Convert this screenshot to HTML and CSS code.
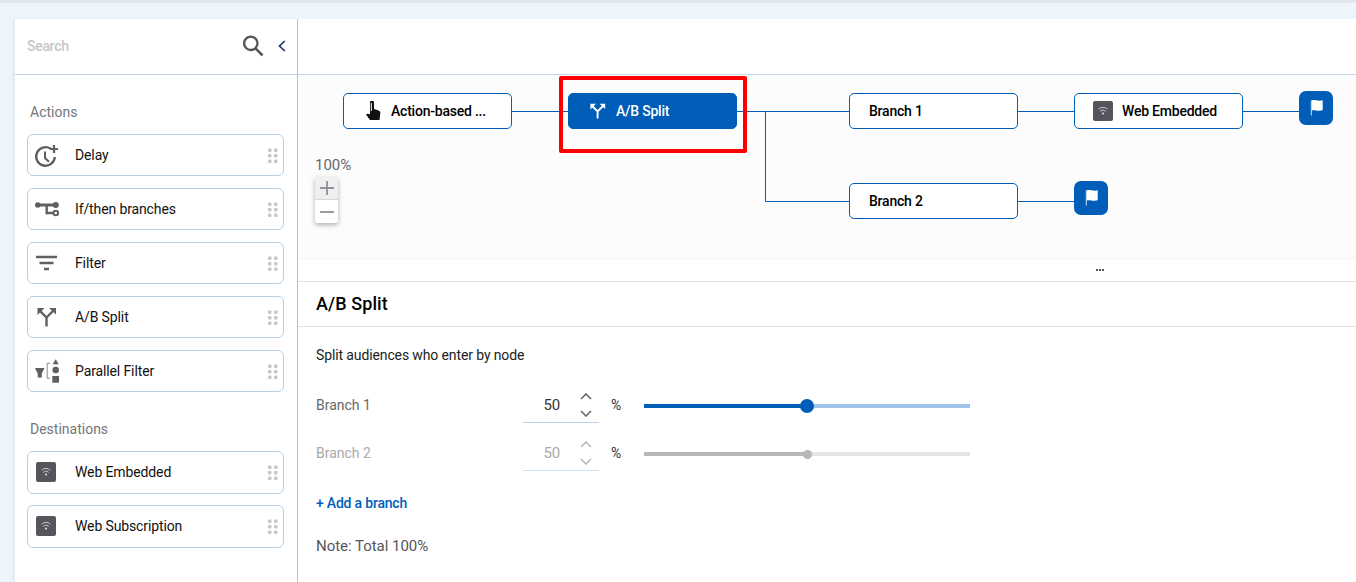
FILE: index.html
```html
<!DOCTYPE html>
<html lang="en">
  <head>
    <meta charset="UTF-8" />
    <meta name="viewport" content="width=device-width, initial-scale=1.0" />
    <title>A/B Split</title>
    <link rel="stylesheet" href="styles.css">
  </head>
  <body>
    <svg class="defs" width="0" height="0">
      <symbol id="wifi" viewBox="0 0 20 20">
        <rect width="20" height="20" rx="2" fill="#55565c" />
        <path d="M5.500 8.200a6.400 6.400 0 0 1 9 0M7.200 10.300a4 4 0 0 1 5.600 0" fill="none" stroke="#c4c4c8" stroke-width="1" />
        <circle cx="10" cy="12.600" r="1" fill="#e8e8ea" />
      </symbol>
      <symbol id="split" viewBox="0 0 20 20">
        <path d="M9.500 19.500v-9L3 4M9.500 10.500L16 4" fill="none" stroke="currentColor" stroke-width="2.400" />
        <path d="M.5 1h7L.5 8zM19 1v6.500L12 1z" fill="currentColor" />
      </symbol>
      <symbol id="flag" viewBox="0 0 16 16">
        <path d="M1.500.5c3-1.300 6 1 11.200-.2v10c-5 1.300-8-1-11.200.2z" fill="#fff" />
        <path d="M1.300.5v15" stroke="#cfe0f3" stroke-width="1" />
      </symbol>
      <symbol id="grip" viewBox="0 0 10 14">
        <g fill="#c6c7ca">
          <rect x="0" y="0" width="3.500" height="3.500" rx="1" />
          <rect x="6" y="0" width="3.500" height="3.500" rx="1" />
          <rect x="0" y="5.500" width="3.500" height="3.500" rx="1" />
          <rect x="6" y="5.500" width="3.500" height="3.500" rx="1" />
          <rect x="0" y="11" width="3.500" height="3.500" rx="1" />
          <rect x="6" y="11" width="3.500" height="3.500" rx="1" />
        </g>
      </symbol>
    </svg>

    <div class="top-strip"></div>
    <div class="app">
      <aside class="sidebar">
        <div class="search">
          <span class="search-text">Search</span>
          <svg class="search-icon" viewBox="0 0 22 22" width="22" height="22">
            <circle cx="7.800" cy="8.300" r="6.700" fill="none" stroke="#55565c" stroke-width="2.300" />
            <path d="M12.500 13.300l7 7" stroke="#55565c" stroke-width="2.600" />
          </svg>
          <svg class="collapse-icon" viewBox="0 0 8 12" width="8" height="12">
            <path d="M6.800 1L1.500 6l5.300 5" fill="none" stroke="#1f3b63" stroke-width="1.700" />
          </svg>
        </div>

        <div class="palette">
          <h4 class="group-title">Actions</h4>
          <div class="group">
            <div class="item">
              <svg class="item-icon" viewBox="0 0 26 24" width="26" height="24">
                <path d="M15.500 5.600A9.300 9.300 0 1 0 19.800 14" fill="none" stroke="#5f5f62" stroke-width="2.400" />
                <path d="M10 8.500V15l4 3.800" fill="none" stroke="#5f5f62" stroke-width="2" />
                <path d="M19 2v8M15 6h8" stroke="#5f5f62" stroke-width="2.200" />
              </svg>
              <span class="item-label">Delay</span>
              <svg class="grip"><use href="#grip" /></svg>
            </div>
            <div class="item">
              <svg class="item-icon" viewBox="0 0 26 16" width="26" height="16">
                <circle cx="2.800" cy="4" r="2.800" fill="#5f5f62" />
                <circle cx="20.800" cy="4" r="3" fill="#5f5f62" />
                <circle cx="20.800" cy="12" r="2.300" fill="none" stroke="#5f5f62" stroke-width="2" />
                <path d="M3 4h18" stroke="#5f5f62" stroke-width="3" />
                <path d="M11.700 4v8h7" fill="none" stroke="#5f5f62" stroke-width="2.400" />
              </svg>
              <span class="item-label">If/then branches</span>
              <svg class="grip"><use href="#grip" /></svg>
            </div>
            <div class="item">
              <svg class="item-icon" viewBox="0 0 26 16" width="26" height="16">
                <path d="M1 2h21M4.500 8h14M9 14h5" stroke="#5f5f62" stroke-width="2.400" />
              </svg>
              <span class="item-label">Filter</span>
              <svg class="grip"><use href="#grip" /></svg>
            </div>
            <div class="item">
              <svg class="item-icon icon-split" viewBox="0 0 20 20" width="20" height="20"><use href="#split" /></svg>
              <span class="item-label">A/B Split</span>
              <svg class="grip"><use href="#grip" /></svg>
            </div>
            <div class="item">
              <svg class="item-icon" viewBox="0 0 26 24" width="26" height="24">
                <path d="M0 9h9.500L6.800 14.500v4H2.700v-4z" fill="#5f5f62" />
                <path d="M15 4.200h-2.800v15H15" fill="none" stroke="#8a8a8c" stroke-width="1" />
                <path d="M20.700.3l3 5h-6z" fill="#5f5f62" />
                <circle cx="20.700" cy="11" r="3.300" fill="#5f5f62" />
                <rect x="17.300" y="17" width="6.700" height="6.700" fill="#5f5f62" />
              </svg>
              <span class="item-label">Parallel Filter</span>
              <svg class="grip"><use href="#grip" /></svg>
            </div>
          </div>

          <h4 class="group-title dest-title">Destinations</h4>
          <div class="group group-dest">
            <div class="item item-dest">
              <svg class="item-icon icon-wifi"><use href="#wifi" /></svg>
              <span class="item-label">Web Embedded</span>
              <svg class="grip"><use href="#grip" /></svg>
            </div>
            <div class="item item-dest">
              <svg class="item-icon icon-wifi"><use href="#wifi" /></svg>
              <span class="item-label">Web Subscription</span>
              <svg class="grip"><use href="#grip" /></svg>
            </div>
          </div>
        </div>
      </aside>

      <main class="main">
        <div class="toolbar"></div>

        <section class="canvas">
          <!-- connector lines -->
          <svg class="lines" width="1058" height="183">
            <path d="M214 36.500h56M439 36.500h112M720 36.500h56M945 36.500h56M467.500 36.500v90h83.500M720 126.500h56" fill="none" stroke="#005eb8" stroke-width="1" />
          </svg>

          <div class="node node-action" style="left:45px;top:18px">
            <svg class="node-hand" viewBox="0 0 16 20" width="16" height="20">
              <path d="M5 1.500a2 2 0 0 1 4 0V8l4 1.300c1.500.5 2.500 1.500 2.300 3l-.8 6.700H5L1 13.500c1.200-1.200 2.700-1 4 0z" fill="#111" />
              <path d="M6.300 2v8" stroke="#fff" stroke-width="1" />
            </svg>
            <span>Action-based ...</span>
          </div>
          <div class="node node-active" style="left:270px;top:18px">
            <svg class="node-split" viewBox="0 0 20 20" width="16" height="16"><use href="#split" /></svg>
            <span>A/B Split</span>
          </div>
          <div class="node node-plain" style="left:551px;top:18px"><span>Branch 1</span></div>
          <div class="node node-plain" style="left:551px;top:108px"><span>Branch 2</span></div>
          <div class="node node-web" style="left:776px;top:18px">
            <svg class="node-wifi"><use href="#wifi" /></svg>
            <span>Web Embedded</span>
          </div>
          <div class="end" style="left:1001px;top:16px"><svg width="16" height="16"><use href="#flag" /></svg></div>
          <div class="end" style="left:776px;top:106px"><svg width="16" height="16"><use href="#flag" /></svg></div>

          <div class="highlight"></div>

          <div class="zoom">
            <div class="zoom-value">100%</div>
            <div class="zoom-box">
              <div class="zoom-btn zoom-in">
                <svg viewBox="0 0 16 16" width="16" height="16"><path d="M1 8h14M8 1v14" stroke="#8f9299" stroke-width="1.800" /></svg>
              </div>
              <div class="zoom-btn">
                <svg viewBox="0 0 16 16" width="16" height="16"><path d="M1 8h14" stroke="#8f9299" stroke-width="1.800" /></svg>
              </div>
            </div>
          </div>
        </section>

        <div class="resizer">
          <span class="dots"><i></i><i></i><i></i></span>
        </div>

        <section class="panel">
          <h2 class="panel-title">A/B Split</h2>
          <div class="panel-body">
            <p class="panel-desc">Split audiences who enter by node</p>

            <div class="split-row">
              <span class="split-name">Branch 1</span>
              <div class="stepper">
                <span class="stepper-value">50</span>
                <span class="stepper-arrows">
                  <svg viewBox="0 0 12 7" width="12" height="7"><path d="M1 6l5-5 5 5" fill="none" stroke="#66676b" stroke-width="1.600" /></svg>
                  <svg viewBox="0 0 12 7" width="12" height="7"><path d="M1 1l5 5 5-5" fill="none" stroke="#66676b" stroke-width="1.600" /></svg>
                </span>
              </div>
              <span class="percent">%</span>
              <div class="slider">
                <div class="slider-fill" style="width:50%"></div>
                <div class="slider-knob" style="left:50%"></div>
              </div>
            </div>

            <div class="split-row split-row-off">
              <span class="split-name">Branch 2</span>
              <div class="stepper">
                <span class="stepper-value">50</span>
                <span class="stepper-arrows">
                  <svg viewBox="0 0 12 7" width="12" height="7"><path d="M1 6l5-5 5 5" fill="none" stroke="#b9b9bb" stroke-width="1.600" /></svg>
                  <svg viewBox="0 0 12 7" width="12" height="7"><path d="M1 1l5 5 5-5" fill="none" stroke="#b9b9bb" stroke-width="1.600" /></svg>
                </span>
              </div>
              <span class="percent">%</span>
              <div class="slider">
                <div class="slider-fill" style="width:50%"></div>
                <div class="slider-knob" style="left:50%"></div>
              </div>
            </div>

            <a class="add-branch">+ Add a branch</a>
            <p class="note">Note: Total 100%</p>
          </div>
        </section>
      </main>
    </div>
  </body>
</html>
```

FILE: styles.css
```css
* {
  box-sizing: border-box;
}

html,
body {
  height: 100%;
}

body {
  margin: 0;
  overflow: hidden;
  font-family: Roboto, "Liberation Sans", sans-serif;
  font-size: 14px;
  letter-spacing: -0.12px;
  color: #111;
  background-color: #edf4fc;
}

.defs {
  position: absolute;
}

.top-strip {
  height: 3px;
  background-color: #e4e6ee;
}

.app {
  display: flex;
  height: 579px;
  padding: 16px 0 0 15px;
}

/* left column */
.sidebar {
  width: 283px;
  flex: none;
  background-color: #fff;
  border-right: 1px solid #b9c3cf;
  box-shadow: -2px 0 3px rgba(0, 0, 0, 0.06);
}

.search {
  display: flex;
  align-items: center;
  height: 56px;
  padding: 0 11px 1px 12px;
  border-bottom: 1px solid #c5d3e6;
}

.search-text {
  flex: 1;
  font-size: 14px;
  font-weight: 500;
  letter-spacing: -0.3px;
  color: #c6c6c6;
}

.search-icon {
  margin-right: 13px;
}

.palette {
  padding: 29px 13px 0 12px;
}

.group-title {
  margin: 0 0 13px 3px;
  font-size: 14px;
  font-weight: 400;
  line-height: 17px;
  letter-spacing: 0;
  color: #74767c;
}

.dest-title {
  margin-top: 29px;
}

.group {
  display: flex;
  flex-direction: column;
  gap: 12px;
}

.group-dest {
  gap: 11px;
}

.item {
  display: flex;
  align-items: center;
  height: 42px;
  padding: 0 5px 0 7px;
  background-color: #fff;
  border: 1px solid #b8cfe6;
  border-radius: 6px;
}

.item-dest {
  height: 43px;
  padding-bottom: 1px;
}

.item-icon {
  flex: none;
  width: 26px;
  margin-right: 14px;
  overflow: visible;
}

.icon-split {
  width: 20px;
  height: 20px;
  margin-left: 2px;
  margin-right: 18px;
  color: #5f5f62;
}

.icon-wifi {
  width: 20px;
  height: 20px;
  margin-left: 1px;
  margin-right: 19px;
}

.item-label {
  flex: 1;
}

.grip {
  width: 10px;
  height: 15px;
}

/* right column */
.main {
  flex: 1;
  min-width: 0;
  display: flex;
  flex-direction: column;
  background-color: #fff;
}

.toolbar {
  height: 56px;
  flex: none;
  border-bottom: 1px solid #c5d3e6;
}

.canvas {
  position: relative;
  height: 183px;
  flex: none;
  background-color: #fcfcfc;
}

.lines {
  position: absolute;
  left: 0;
  top: 0;
}

.node {
  position: absolute;
  display: flex;
  align-items: center;
  width: 169px;
  height: 36px;
  background-color: #fff;
  border: 1px solid #005eb8;
  border-radius: 5px;
  font-weight: 500;
  letter-spacing: -0.22px;
  color: #000;
}

.node-action {
  padding-left: 21px;
}

.node-hand {
  margin-right: 10px;
}

.node-active {
  padding-left: 21px;
  background-color: #005eb8;
  color: #fff;
}

.node-split {
  margin-right: 10px;
  color: #fff;
}

.node-plain {
  padding-left: 19px;
}

.node-web {
  padding-left: 18px;
}

.node-wifi {
  width: 20px;
  height: 20px;
  margin-right: 9px;
}

.end {
  position: absolute;
  display: flex;
  align-items: center;
  justify-content: center;
  width: 34px;
  height: 34px;
  padding-left: 3px;
  background-color: #005eb8;
  border-radius: 7px;
}

.highlight {
  position: absolute;
  left: 261px;
  top: 1px;
  width: 188px;
  height: 77px;
  border: 4px solid #fe0000;
  border-radius: 2px;
}

.zoom {
  position: absolute;
  left: 17px;
  top: 81px;
}

.zoom-value {
  font-size: 15px;
  line-height: 18px;
  letter-spacing: 0;
  color: #66676b;
}

.zoom-box {
  width: 23px;
  margin-top: 3px;
  background-color: #fff;
  border-radius: 2px;
  box-shadow: 0 2px 5px rgba(0, 0, 0, 0.3);
}

.zoom-btn {
  display: flex;
  align-items: center;
  justify-content: center;
  height: 23px;
}

.zoom-in {
  background-color: #efefef;
  border-bottom: 1px solid #d8d8d8;
}

.resizer {
  display: flex;
  align-items: center;
  justify-content: center;
  height: 24px;
  flex: none;
  padding-top: 1px;
  border-bottom: 1px solid #e2e2e2;
  box-shadow: inset 0 2px 2px -1px rgba(0, 0, 0, 0.05);
}

.dots {
  display: flex;
  gap: 1px;
  margin-left: 546px;
}

.dots i {
  width: 2px;
  height: 2px;
  background-color: #55565c;
}

.panel-title {
  height: 45px;
  margin: 0;
  padding: 0 18px;
  font-size: 18px;
  font-weight: 500;
  line-height: 44px;
  letter-spacing: 0.1px;
  color: #000;
  border-bottom: 1px solid #e2e2e2;
}

.panel-body {
  padding: 20px 18px 0;
}

.panel-desc {
  margin: 0 0 24px;
  line-height: 17px;
  color: #222;
}

.split-row {
  display: flex;
  align-items: center;
  height: 34px;
  margin-bottom: 14px;
}

.split-name {
  width: 207px;
  flex: none;
  letter-spacing: 0;
  color: #66676b;
}

.stepper {
  display: flex;
  align-items: center;
  justify-content: flex-end;
  width: 76px;
  height: 36px;
  flex: none;
  padding-right: 7px;
  border-bottom: 1px solid #b9d0e8;
}

.stepper-value {
  margin-right: 20px;
  font-size: 15px;
  color: #333;
}

.stepper-arrows {
  display: flex;
  flex-direction: column;
  gap: 10px;
}

.stepper-arrows svg {
  display: block;
}

.percent {
  width: 45px;
  flex: none;
  padding-left: 12px;
  color: #333;
}

.slider {
  position: relative;
  width: 326px;
  height: 4px;
  margin-top: 2px;
  background-color: #a0c2e6;
}

.slider-fill {
  height: 4px;
  background-color: #005eb8;
}

.slider-knob {
  position: absolute;
  top: -5px;
  width: 14px;
  height: 14px;
  margin-left: -7px;
  background-color: #005eb8;
  border-radius: 50%;
}

.split-row-off .split-name,
.split-row-off .stepper-value {
  color: #a9a9a9;
}

.split-row-off .stepper {
  border-bottom-color: #d4e3f1;
}

.split-row-off .slider {
  background-color: #e5e5e5;
}

.split-row-off .slider-fill {
  background-color: #b7b7b7;
}

.split-row-off .slider-knob {
  top: -2px;
  width: 9px;
  height: 9px;
  margin-left: -4px;
  background-color: #b7b7b7;
}

.add-branch {
  display: block;
  margin-top: 25px;
  line-height: 17px;
  font-weight: 500;
  letter-spacing: -0.2px;
  color: #005eb8;
}

.note {
  margin: 26px 0 0;
  font-size: 15px;
  line-height: 17px;
  letter-spacing: -0.03px;
  color: #55565c;
}
```
